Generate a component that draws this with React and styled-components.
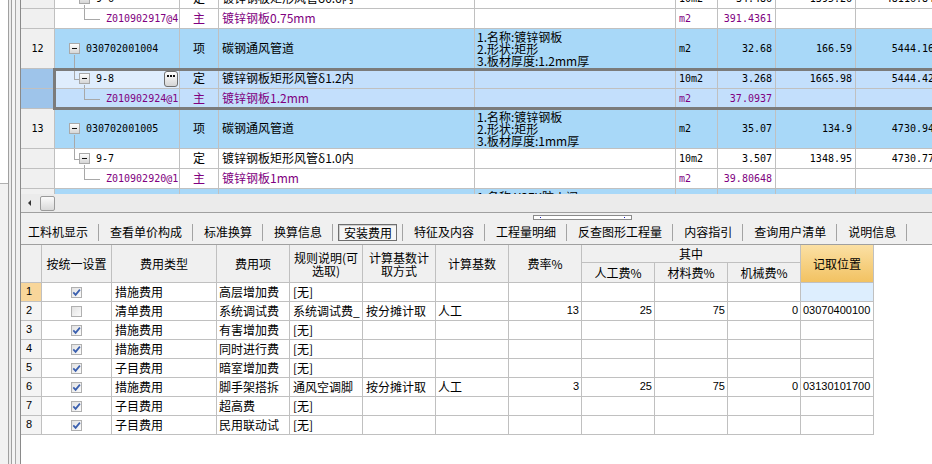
import React from 'react';
import styled, { createGlobalStyle, css } from 'styled-components';

const GlobalStyle = createGlobalStyle`
  html, body { margin: 0; padding: 0; background: #fff; }
  body {
    font-family: "Noto Sans CJK SC", "Noto Sans", sans-serif;
    font-size: 12px;
    line-height: 1.2;
    color: #000;
  }
  #root { width: 932px; height: 464px; overflow: hidden; }
`;

const GRID = '#c0c0c0';
const TREE_LINE = '#a8a8a8';
const PURPLE = '#800080';
const TOP_COLS = '34px 125px 39px 256px 201px 42px 58px 80px 82px';
const FEE_COLS = '21px 70px 105px 73px 73px 73px 73px 73px 73px 73px 73px 73px';

const Window = styled.div`
  display: flex;
  width: 932px;
  height: 464px;
  overflow: hidden;
`;

const LeftRail = styled.div`
  flex: 0 0 20px;
  display: flex;
  flex-direction: column;
  background: linear-gradient(to right, #f2f2f2 0 8px, #a0a0a0 8px 9px, #ececec 9px 11px,
    #a0a0a0 11px 12px, #f4f4f4 12px 15px, #a8a8a8 15px 16px, #f0f0f0 16px 20px);
`;

const RailPane = styled.div`
  width: 8px;
  height: 183px;
  background: #fff;
  border-bottom: 1px solid #b0b0b0;
`;

const Main = styled.div`
  flex: 1;
  min-width: 0;
  display: flex;
  flex-direction: column;
  border-left: 1px solid #8a8a8a;
  background: #f0f0f0;
`;

/* ---------- top grid ---------- */

const Viewport = styled.div`
  position: relative;
  height: 194px;
  flex: none;
  overflow: hidden;
  background: #fff;
`;

const GridBody = styled.div`
  margin-top: -11px;
`;

const GridRow = styled.div`
  display: grid;
  grid-template-columns: ${TOP_COLS};
  height: ${p => (p.$tall ? 40 : 20)}px;
  background: ${p => p.$bg};
  color: ${p => (p.$purple ? PURPLE : '#000')};
`;

const Cell = styled.div`
  box-sizing: border-box;
  border-right: 1px solid ${GRID};
  border-bottom: 1px solid ${GRID};
  display: flex;
  align-items: center;
  justify-content: ${p => (p.$align === 'right' ? 'flex-end' : p.$align === 'center' ? 'center' : 'flex-start')};
  padding: 0 3px;
  white-space: nowrap;
  overflow: hidden;
  background: ${p => p.$bg || 'transparent'};
  ${p => p.$mono && css`
    font-family: "DejaVu Sans Mono", "Liberation Mono", monospace;
    font-size: 10px;
  `}
`;

const HeaderCell = styled(Cell)`
  color: #000;
`;

const TreeCell = styled(Cell)`
  position: relative;
  padding-left: ${p => [14, 24, 51][p.$level]}px;
  padding-right: 1px;
  ${p => p.$level > 0 && css`
    &::before {
      content: '';
      position: absolute;
      left: ${p.$level === 1 ? 19 : 29}px;
      top: 0;
      width: ${p.$level === 1 ? 5 : 16}px;
      height: calc(50% + 1px);
      box-sizing: border-box;
      border-left: 1px solid ${TREE_LINE};
      border-bottom: 1px solid ${TREE_LINE};
    }
  `}
  ${p => p.$open && css`
    &::after {
      content: '';
      position: absolute;
      left: ${p.$level === 0 ? 19 : 29}px;
      top: calc(50% + 6px);
      bottom: 0;
      border-left: 1px solid ${TREE_LINE};
    }
  `}
`;

const Toggle = styled.span`
  flex: none;
  box-sizing: border-box;
  width: 11px;
  height: 11px;
  margin-right: 6px;
  border: 1px solid #a9a9a9;
  background: linear-gradient(#fdfdfd, #d6d6d6);
  display: flex;
  align-items: center;
  justify-content: center;
  &::before {
    content: '';
    width: 5px;
    height: 1px;
    background: #111;
  }
`;

const Code = styled.span`
  font-family: "DejaVu Sans Mono", "Liberation Mono", monospace;
  font-size: 10px;
`;

const MoreBtn = styled.span`
  margin-left: auto;
  flex: none;
  box-sizing: border-box;
  width: 14px;
  height: 16px;
  border: 1px solid #6f6f6f;
  border-radius: 3px;
  background: linear-gradient(#ffffff, #d5d5d5);
  display: flex;
  justify-content: center;
  gap: 1px;
  padding-top: 3px;
`;

const Dot = styled.span`
  width: 2px;
  height: 2px;
  background: #111;
`;

const FeatureCell = styled(Cell)`
  flex-direction: column;
  align-items: flex-start;
  justify-content: flex-start;
  padding: 2px 2px 0;
  line-height: 12px;
  color: #000;
`;

const Selection = styled.div`
  position: absolute;
  left: 32px;
  top: 68px;
  width: 940px;
  height: 42px;
  box-sizing: border-box;
  border: 3px solid #7b7b7b;
  pointer-events: none;
`;

const HScroll = styled.div`
  flex: none;
  height: 18px;
  border-bottom: 1px solid #a0a0a0;
  background: #ebebeb;
  display: flex;
  align-items: center;
  padding-left: 7px;
`;

const ArrowLeft = styled.span`
  width: 0;
  height: 0;
  border-top: 3px solid transparent;
  border-bottom: 3px solid transparent;
  border-right: 3px solid #333;
`;

const Thumb = styled.span`
  margin-left: 9px;
  box-sizing: border-box;
  width: 15px;
  height: 15px;
  border: 1px solid #9a9a9a;
  border-radius: 2px;
  background: linear-gradient(#fafafa, #d9d9d9);
`;

const Splitter = styled.div`
  flex: none;
  height: 7px;
  padding-top: 2px;
  box-sizing: border-box;
`;

const Grip = styled.div`
  margin-left: 512px;
  width: 99px;
  height: 5px;
  box-sizing: border-box;
  border: 1px solid #8a8a8a;
  background: #fff;
  display: flex;
  align-items: center;
  justify-content: space-between;
  padding: 0 6px;
`;

const GripDot = styled.span`
  width: 1px;
  height: 1px;
  background: #1a1ac0;
`;

/* ---------- tabs ---------- */

const TabBar = styled.div`
  flex: none;
  height: 24px;
  border-bottom: 1px solid #a0a0a0;
  display: flex;
  align-items: center;
  padding-left: 7px;
`;

const Tab = styled.div`
  white-space: nowrap;
  padding: ${p => (p.$active ? '0 5px' : '0 10px 0 11px')};
  &:first-child { padding-left: 0; }
`;

const ActiveBox = styled.span`
  display: inline-block;
  box-sizing: border-box;
  height: 17px;
  line-height: 15px;
  padding: 0 4px 0 5px;
  border: 1px solid #6f6f6f;
  background: #f6f6f6;
  box-shadow: inset 1px 1px 0 #cfcfcf;
`;

const TabSep = styled.span`
  flex: none;
  width: 1px;
  height: 17px;
  background: #a3a3a3;
`;

/* ---------- fee grid ---------- */

const Lower = styled.div`
  flex: 1;
  background: #fff;
`;

const HeadGrid = styled.div`
  display: grid;
  grid-template-columns: ${FEE_COLS};
  grid-template-rows: 18px 20px;
  width: 853px;
`;

const Head = styled.div`
  grid-column: ${p => p.$col};
  grid-row: ${p => p.$row || '1 / 3'};
  box-sizing: border-box;
  border-right: 1px solid ${GRID};
  border-bottom: 1px solid ${GRID};
  background: ${p => (p.$accent ? 'linear-gradient(#fbe0a4, #f2c262)' : '#f0f0f0')};
  display: flex;
  align-items: center;
  justify-content: center;
  text-align: center;
  line-height: 13px;
  white-space: nowrap;
`;

const FeeRow = styled.div`
  display: grid;
  grid-template-columns: ${FEE_COLS};
  width: 853px;
  height: 19px;
`;

const FeeCell = styled.div`
  box-sizing: border-box;
  border-right: 1px solid ${GRID};
  border-bottom: 1px solid ${GRID};
  display: flex;
  align-items: center;
  justify-content: ${p => (p.$align === 'right' ? 'flex-end' : p.$align === 'center' ? 'center' : 'flex-start')};
  padding: 0 ${p => p.$pad ?? 3}px;
  white-space: nowrap;
  overflow: hidden;
  background: ${p => p.$bg || '#fff'};
  ${p => p.$num && css`
    font-family: "Liberation Sans", Arial, sans-serif;
    font-size: 11px;
  `}
`;

const Box = styled.span`
  box-sizing: border-box;
  width: 11px;
  height: 11px;
  border: 1px solid #b0b0b0;
  background: linear-gradient(135deg, #e2e2e2, #fbfbfb);
  display: flex;
  align-items: center;
  justify-content: center;
`;

function Check({ on }) {
  return (
    <Box>
      {on && (
        <svg width="9" height="9" viewBox="0 0 9 9">
          <path d="M1.3 4.4 L3.6 6.9 L7.9 1.6" fill="none" stroke="#3a5fae" strokeWidth="1.7" />
        </svg>
      )}
    </Box>
  );
}

const topRows = [
  { kind: 'quota', level: 1, open: true, code: '9-6', type: '定', name: '镀锌钢板矩形风管δ0.6内', unit: '10m2', qty: '34.486', price: '1395.26', total: '48116.84' },
  { kind: 'mat', level: 2, code: 'Z010902917@4', type: '主', name: '镀锌钢板0.75mm', unit: 'm2', qty: '391.4361' },
  { kind: 'item', level: 0, open: true, no: '12', code: '030702001004', type: '项', name: '碳钢通风管道', feature: ['1.名称:镀锌钢板', '2.形状:矩形', '3.板材厚度:1.2mm厚'], unit: 'm2', qty: '32.68', price: '166.59', total: '5444.16' },
  { kind: 'quota', level: 1, open: true, sel: true, focus: true, more: true, code: '9-8', type: '定', name: '镀锌钢板矩形风管δ1.2内', unit: '10m2', qty: '3.268', price: '1665.98', total: '5444.42' },
  { kind: 'mat', level: 2, sel: true, code: 'Z010902924@1', type: '主', name: '镀锌钢板1.2mm', unit: 'm2', qty: '37.0937' },
  { kind: 'item', level: 0, open: true, no: '13', code: '030702001005', type: '项', name: '碳钢通风管道', feature: ['1.名称:镀锌钢板', '2.形状:矩形', '3.板材厚度:1mm厚'], unit: 'm2', qty: '35.07', price: '134.9', total: '4730.94' },
  { kind: 'quota', level: 1, open: true, code: '9-7', type: '定', name: '镀锌钢板矩形风管δ1.0内', unit: '10m2', qty: '3.507', price: '1348.95', total: '4730.77' },
  { kind: 'mat', level: 2, code: 'Z010902920@1', type: '主', name: '镀锌钢板1mm', unit: 'm2', qty: '39.80648' },
  { kind: 'item', level: 0, open: true, no: '', code: '', type: '', name: '', feature: ['1.名称:YSFK防火阀'], unit: '', qty: '', price: '', total: '' },
];

const tabs = ['工料机显示', '查看单价构成', '标准换算', '换算信息', '安装费用', '特征及内容', '工程量明细', '反查图形工程量', '内容指引', '查询用户清单', '说明信息'];

const fees = [
  { no: 1, on: true, type: '措施费用', item: '高层增加费', rule: '[无]' },
  { no: 2, on: false, type: '清单费用', item: '系统调试费', rule: '系统调试费_', method: '按分摊计取', base: '人工', rate: '13', labor: '25', mat: '75', mach: '0', pos: '03070400100' },
  { no: 3, on: true, type: '措施费用', item: '有害增加费', rule: '[无]' },
  { no: 4, on: true, type: '措施费用', item: '同时进行费', rule: '[无]' },
  { no: 5, on: true, type: '子目费用', item: '暗室增加费', rule: '[无]' },
  { no: 6, on: true, type: '措施费用', item: '脚手架搭拆', rule: '通风空调脚', method: '按分摊计取', base: '人工', rate: '3', labor: '25', mat: '75', mach: '0', pos: '03130101700' },
  { no: 7, on: true, type: '子目费用', item: '超高费', rule: '[无]' },
  { no: 8, on: true, type: '子目费用', item: '民用联动试', rule: '[无]' },
];

function TopRow({ row }) {
  const tall = row.kind === 'item';
  const bg = row.sel ? '#c3dffc' : tall ? '#a8d8f8' : '#fff';
  return (
    <GridRow $tall={tall} $bg={bg} $purple={row.kind === 'mat'}>
      <HeaderCell $align="center" $mono $bg={row.sel ? '#9ec4ea' : '#f0f0f0'}>{row.no}</HeaderCell>
      <TreeCell $level={row.level} $open={row.open} $bg={row.focus ? '#dfedfd' : undefined}>
        {row.level < 2 && <Toggle />}
        <Code>{row.code}</Code>
        {row.more && <MoreBtn><Dot /><Dot /><Dot /></MoreBtn>}
      </TreeCell>
      <Cell $align="center">{row.type}</Cell>
      <Cell>{row.name}</Cell>
      <FeatureCell>
        {(row.feature || []).map(l => <div key={l}>{l}</div>)}
      </FeatureCell>
      <Cell $mono>{row.unit}</Cell>
      <Cell $mono $align="right">{row.qty}</Cell>
      <Cell $mono $align="right">{row.price}</Cell>
      <Cell $mono $align="right">{row.total}</Cell>
    </GridRow>
  );
}

export default function App() {
  return (
    <>
      <GlobalStyle />
      <Window>
        <LeftRail><RailPane /></LeftRail>
        <Main>
          <Viewport>
            <GridBody>
              {topRows.map((r, i) => <TopRow key={i} row={r} />)}
            </GridBody>
            <Selection />
          </Viewport>
          <HScroll><ArrowLeft /><Thumb /></HScroll>
          <Splitter><Grip><GripDot /><GripDot /></Grip></Splitter>
          <TabBar>
            {tabs.map((t, i) => (
              <React.Fragment key={t}>
                <Tab $active={i === 4}>{i === 4 ? <ActiveBox>{t}</ActiveBox> : t}</Tab>
                <TabSep />
              </React.Fragment>
            ))}
          </TabBar>
          <Lower>
            <HeadGrid>
              <Head $col="1" />
              <Head $col="2">按统一设置</Head>
              <Head $col="3">费用类型</Head>
              <Head $col="4">费用项</Head>
              <Head $col="5">规则说明(可<br />选取)</Head>
              <Head $col="6">计算基数计<br />取方式</Head>
              <Head $col="7">计算基数</Head>
              <Head $col="8">费率%</Head>
              <Head $col="9 / 12" $row="1">其中</Head>
              <Head $col="9" $row="2">人工费%</Head>
              <Head $col="10" $row="2">材料费%</Head>
              <Head $col="11" $row="2">机械费%</Head>
              <Head $col="12" $accent>记取位置</Head>
            </HeadGrid>
            {fees.map(f => (
              <FeeRow key={f.no}>
                <FeeCell $num $pad={5} $bg={f.no === 1 ? '#f8d69a' : '#f4f4f4'}>{f.no}</FeeCell>
                <FeeCell $align="center"><Check on={f.on} /></FeeCell>
                <FeeCell>{f.type}</FeeCell>
                <FeeCell $pad={2}>{f.item}</FeeCell>
                <FeeCell>{f.rule}</FeeCell>
                <FeeCell>{f.method}</FeeCell>
                <FeeCell $pad={2}>{f.base}</FeeCell>
                <FeeCell $num $pad={2} $align="right">{f.rate}</FeeCell>
                <FeeCell $num $pad={2} $align="right">{f.labor}</FeeCell>
                <FeeCell $num $pad={2} $align="right">{f.mat}</FeeCell>
                <FeeCell $num $pad={2} $align="right">{f.mach}</FeeCell>
                <FeeCell $num $pad={2} $bg={f.no === 1 ? '#ddeefe' : undefined}>{f.pos}</FeeCell>
              </FeeRow>
            ))}
          </Lower>
        </Main>
      </Window>
    </>
  );
}
